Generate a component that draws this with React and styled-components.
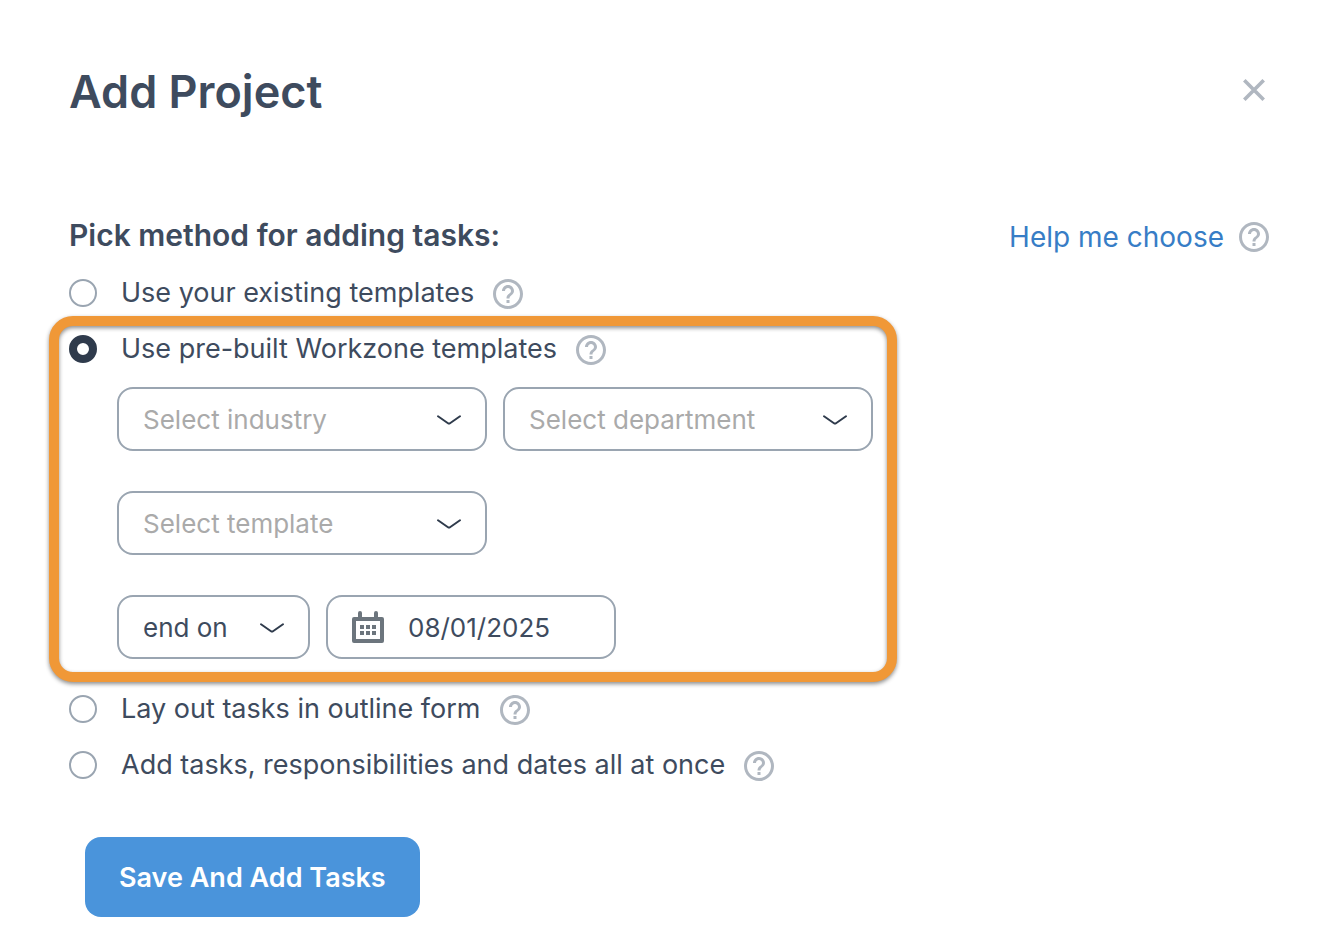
import { useState } from "react";
import styled, { createGlobalStyle } from "styled-components";
import { MdHelpOutline } from "react-icons/md";

const GlobalStyle = createGlobalStyle`
  * {
    box-sizing: border-box;
  }
  body {
    margin: 0;
    background: #fff;
    color: #3e4b5e;
    font-family: "Inter", "Liberation Sans", sans-serif;
    font-size: 27px;
  }
  button, input, select {
    font-family: inherit;
    color: inherit;
  }
`;

const Dialog = styled.main`
  padding: 58px 62px 24px 69px;
`;

const Header = styled.header`
  display: flex;
  align-items: center;
  justify-content: space-between;
  margin-bottom: 86px;
`;

const Title = styled.h1`
  margin: 0;
  padding-top: 4px;
  font-size: 45px;
  font-weight: 600;
  line-height: 60px;
`;

const IconButton = styled.button`
  display: flex;
  padding: 0;
  border: 0;
  background: none;
  color: #b0b7c0;
  cursor: pointer;
`;

const MethodHeader = styled.div`
  display: flex;
  align-items: center;
  justify-content: space-between;
  height: 57px;
`;

const MethodTitle = styled.h2`
  margin: 0;
  padding-bottom: 4px;
  font-size: 30px;
  font-weight: 600;
  line-height: 36px;
`;

const HelpGroup = styled.div`
  display: flex;
  align-items: center;
  gap: 12px;
`;

const HelpLink = styled.a`
  color: #377dc6;
  font-size: 28px;
  line-height: 36px;
  text-decoration: none;
`;

const MethodRow = styled.div`
  display: flex;
  align-items: center;
  gap: 16px;
  height: 56px;
  ${IconButton} {
    padding-top: 2px;
  }
`;

const MethodLabel = styled.label`
  display: flex;
  align-items: center;
  gap: 24px;
  line-height: 36px;
  cursor: pointer;
`;

const Radio = styled.input`
  appearance: none;
  width: 28px;
  height: 28px;
  margin: 0;
  border: 2px solid #9aa5b1;
  border-radius: 50%;
  background: #fff;
  &:checked {
    border: 8px solid #2f3b4c;
  }
`;

const Highlight = styled.div`
  position: relative;
  width: fit-content;
  padding-bottom: 22px;
  &::after {
    content: "";
    position: absolute;
    inset: -5px -24px -1px -20px;
    border: 10px solid #f09837;
    border-radius: 24px;
    filter: drop-shadow(0 2px 2px rgba(0, 0, 0, 0.45));
    pointer-events: none;
  }
`;

const Fields = styled.div`
  display: grid;
  gap: 40px;
  padding: 10px 0 0 48px;
`;

const FieldRow = styled.div`
  display: flex;
  gap: 16px;
`;

const SelectWrap = styled.div`
  position: relative;
  width: ${(props) => props.$width};
  svg {
    position: absolute;
    top: 28px;
    right: 26px;
    pointer-events: none;
  }
`;

const Select = styled.select`
  appearance: none;
  width: 100%;
  height: 64px;
  padding: 0 60px 0 24px;
  border: 2px solid #9aa5b1;
  border-radius: 16px;
  background: #fff;
  color: ${(props) => (props.$placeholder ? "#aaa" : "#3e4b5e")};
  font-size: 26px;
`;

const DateField = styled.label`
  display: flex;
  align-items: center;
  gap: 24px;
  width: 290px;
  height: 64px;
  padding: 0 24px;
  border: 2px solid #9aa5b1;
  border-radius: 16px;
  svg {
    flex-shrink: 0;
  }
`;

const DateInput = styled.input`
  width: 100%;
  min-width: 0;
  padding: 0;
  border: 0;
  background: none;
  font-size: 26px;
`;

const SaveButton = styled.button`
  height: 80px;
  margin: 44px 0 0 16px;
  padding: 0 34px;
  border: 0;
  border-radius: 16px;
  background: #4a94db;
  color: #fff;
  font-size: 27px;
  font-weight: 600;
  cursor: pointer;
`;

const CloseIcon = () => (
  <svg width="36" height="36" viewBox="0 0 36 36" fill="none" aria-hidden="true">
    <path d="M8.3 8.3 27.7 27.7M27.7 8.3 8.3 27.7" stroke="currentColor" strokeWidth="3.6" />
  </svg>
);

const CalendarIcon = () => (
  <svg width="32" height="32" viewBox="0 0 32 32" fill="#6c757d" aria-hidden="true">
    <path
      fillRule="evenodd"
      d="M6 6V2a2 2 0 0 1 4 0v4h12V2a2 2 0 0 1 4 0v4h4a2 2 0 0 1 2 2v22a2 2 0 0 1-2 2H2a2 2 0 0 1-2-2V8a2 2 0 0 1 2-2zM4 10v18h24V10z"
    />
    <path d="M8 14h4v4H8zM14 14h4v4h-4zM20 14h4v4h-4zM8 20h4v4H8zM14 20h4v4h-4zM20 20h4v4h-4z" />
  </svg>
);

const SelectField = ({ label, width = "370px", placeholder = true }) => (
  <SelectWrap $width={width}>
    <Select aria-label={label} $placeholder={placeholder}>
      <option>{label}</option>
    </Select>
    <svg width="24" height="10" viewBox="0 0 24 10" fill="none" aria-hidden="true">
      <path
        d="M1 1.2 11 8.2q1 .7 2 0l10-7"
        stroke="#2f3b4c"
        strokeWidth="2"
        strokeLinecap="round"
      />
    </svg>
  </SelectWrap>
);

const Method = ({ id, text, selected, onSelect }) => (
  <MethodRow>
    <MethodLabel htmlFor={id}>
      <Radio
        id={id}
        type="radio"
        name="method"
        checked={selected === id}
        onChange={() => onSelect(id)}
      />
      {text}
    </MethodLabel>
    <IconButton type="button" aria-label={`Help: ${text}`}>
      <MdHelpOutline size={36} />
    </IconButton>
  </MethodRow>
);

const App = () => {
  const [selected, setSelected] = useState("prebuilt");
  const [date, setDate] = useState("08/01/2025");

  return (
    <>
      <GlobalStyle />
      <Dialog>
        <Header>
          <Title>Add Project</Title>
          <IconButton type="button" aria-label="Close">
            <CloseIcon />
          </IconButton>
        </Header>
        <MethodHeader>
          <MethodTitle>Pick method for adding tasks:</MethodTitle>
          <HelpGroup>
            <HelpLink href="#help">Help me choose</HelpLink>
            <IconButton type="button" aria-label="Help">
              <MdHelpOutline size={36} />
            </IconButton>
          </HelpGroup>
        </MethodHeader>
        <Method
          id="existing"
          text="Use your existing templates"
          selected={selected}
          onSelect={setSelected}
        />
        <Highlight>
          <Method
            id="prebuilt"
            text="Use pre-built Workzone templates"
            selected={selected}
            onSelect={setSelected}
          />
          <Fields>
            <FieldRow>
              <SelectField label="Select industry" />
              <SelectField label="Select department" />
            </FieldRow>
            <FieldRow>
              <SelectField label="Select template" />
            </FieldRow>
            <FieldRow>
              <SelectField label="end on" width="193px" placeholder={false} />
              <DateField>
                <CalendarIcon />
                <DateInput
                  aria-label="Date"
                  value={date}
                  onChange={(e) => setDate(e.target.value)}
                />
              </DateField>
            </FieldRow>
          </Fields>
        </Highlight>
        <Method
          id="outline"
          text="Lay out tasks in outline form"
          selected={selected}
          onSelect={setSelected}
        />
        <Method
          id="all"
          text="Add tasks, responsibilities and dates all at once"
          selected={selected}
          onSelect={setSelected}
        />
        <SaveButton type="button">Save And Add Tasks</SaveButton>
      </Dialog>
    </>
  );
};

export default App;
